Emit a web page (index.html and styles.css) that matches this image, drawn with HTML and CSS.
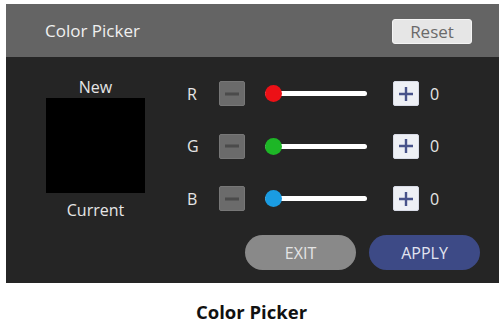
FILE: index.html
```html
<!DOCTYPE html>
<html lang="en">
<head>
  <meta charset="UTF-8" />
  <title>Color Picker</title>
  <link rel="stylesheet" href="styles.css">
</head>
<body>
  <div class="panel">
    <div class="header">
      <span class="title">Color Picker</span>
      <button class="reset-btn">Reset</button>
    </div>

    <div class="content">
      <div class="preview">
        <span>New</span>
        <div class="swatch"></div>
        <span class="current">Current</span>
      </div>

      <div class="channels">
        <div class="channel">
          <span class="label">R</span>
          <button class="step minus"><svg width="14" height="4" viewBox="0 0 14 4"><rect x="0" y="0.5" width="14" height="3" fill="#4b4b4b"/></svg></button>
          <div class="track"><span class="knob red"></span></div>
          <button class="step plus"><svg width="16" height="16" viewBox="0 0 16 16"><path d="M8 1v14M1 8h14" stroke="#48538a" stroke-width="2.4"/></svg></button>
          <span class="value">0</span>
        </div>
        <div class="channel">
          <span class="label">G</span>
          <button class="step minus"><svg width="14" height="4" viewBox="0 0 14 4"><rect x="0" y="0.5" width="14" height="3" fill="#4b4b4b"/></svg></button>
          <div class="track"><span class="knob green"></span></div>
          <button class="step plus"><svg width="16" height="16" viewBox="0 0 16 16"><path d="M8 1v14M1 8h14" stroke="#48538a" stroke-width="2.4"/></svg></button>
          <span class="value">0</span>
        </div>
        <div class="channel">
          <span class="label">B</span>
          <button class="step minus"><svg width="14" height="4" viewBox="0 0 14 4"><rect x="0" y="0.5" width="14" height="3" fill="#4b4b4b"/></svg></button>
          <div class="track"><span class="knob blue"></span></div>
          <button class="step plus"><svg width="16" height="16" viewBox="0 0 16 16"><path d="M8 1v14M1 8h14" stroke="#48538a" stroke-width="2.4"/></svg></button>
          <span class="value">0</span>
        </div>
      </div>
    </div>

    <div class="actions">
      <button class="pill exit">EXIT</button>
      <button class="pill apply">APPLY</button>
    </div>
  </div>

  <p class="caption">Color Picker</p>
</body>
</html>
```

FILE: styles.css
```css
* {
  box-sizing: border-box;
}

body {
  margin: 0;
  background: #fff;
  font-family: "Open Sans", "Noto Sans", sans-serif;
}

button {
  font-family: inherit;
  border: none;
  padding: 0;
  cursor: pointer;
}

.panel {
  margin: 4px 4px 0 6px;
  background: #252525;
}

.header {
  height: 53px;
  background: #646464;
  display: flex;
  align-items: center;
  justify-content: space-between;
  padding: 0 27px 0 39px;
}

.title {
  color: #f0f0f0;
  font-size: 17px;
}

.reset-btn {
  width: 80px;
  height: 25px;
  margin-top: 2px;
  background: #e6e6e6;
  border: 1px solid #f4f4f4;
  border-radius: 3px;
  color: #6a6a6a;
  font-size: 17px;
  line-height: 22px;
}

.content {
  display: flex;
}

.preview {
  width: 99px;
  margin-left: 40px;
  padding-top: 20px;
  display: flex;
  flex-direction: column;
  align-items: center;
  color: #e6e6e6;
  font-size: 16px;
  line-height: 20px;
}

.swatch {
  width: 99px;
  height: 95px;
  margin-top: 1px;
  background: #000;
}

.current {
  margin-top: 7px;
}

.channels {
  margin-left: 42px;
  padding-top: 24px;
  display: flex;
  flex-direction: column;
  gap: 27.5px;
}

.channel {
  display: flex;
  align-items: center;
  height: 25px;
}

.label {
  width: 32px;
  color: #e6e6e6;
  font-size: 16px;
}

.step {
  width: 26px;
  height: 25px;
  border-radius: 2px;
  display: flex;
  align-items: center;
  justify-content: center;
}

.minus {
  background: #6b6b6b;
  border: 1px solid #777;
}

.plus {
  background: #eef0f5;
  border: 1px solid #d8dbe6;
}

.track {
  position: relative;
  width: 102px;
  height: 5px;
  margin: 0 26px 0 20px;
  background: #fff;
  border-radius: 3px;
}

.knob {
  position: absolute;
  left: 0;
  top: -6px;
  width: 17px;
  height: 17px;
  border-radius: 50%;
}

.red {
  background: #ec1016;
}

.green {
  background: #1db626;
}

.blue {
  background: #1a9ce2;
}

.value {
  margin-left: 11px;
  color: #e6e6e6;
  font-size: 16px;
}

.actions {
  display: flex;
  justify-content: flex-end;
  gap: 13px;
  padding: 15px 19px 13px 0;
}

.pill {
  width: 111px;
  height: 35px;
  border-radius: 18px;
  font-size: 16px;
}

.exit {
  background: #898989;
  color: #e4e4e4;
}

.apply {
  background: #3d4a86;
  color: #e2e4f0;
}

.caption {
  margin: 17px 0 0;
  text-align: center;
  font-size: 18.5px;
  font-weight: 700;
  line-height: 24px;
  color: #111;
}
```
